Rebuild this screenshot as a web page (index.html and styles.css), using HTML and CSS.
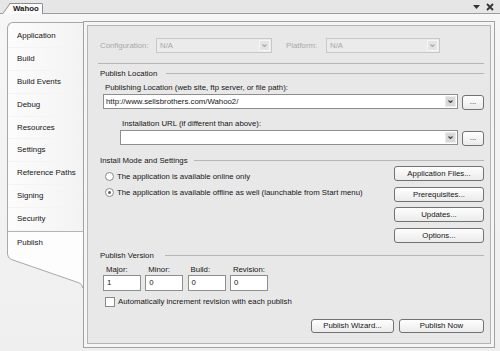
FILE: index.html
```html
<!DOCTYPE html>
<html lang="en">

<head>
  <meta charset="UTF-8" />
  <meta name="viewport" content="width=device-width, initial-scale=1.0" />
  <title>Wahoo - Publish</title>
  <link rel="stylesheet" href="styles.css">
</head>

<body>
  <div class="doc-strip">
    <div class="doc-tab">Wahoo</div>
    <div class="strip-btns">
      <svg width="7" height="4" viewBox="0 0 7 4"><path d="M0 0H7L3.5 4Z" fill="#333" /></svg>
      <svg width="8" height="8" viewBox="0 0 8 8"><path d="M1 1L7 7M7 1L1 7" stroke="#333" stroke-width="1.8" /></svg>
    </div>
  </div>

  <div class="designer">
    <div class="side">
      <ul class="side-tabs">
        <li>Application</li>
        <li>Build</li>
        <li>Build Events</li>
        <li>Debug</li>
        <li>Resources</li>
        <li>Settings</li>
        <li>Reference Paths</li>
        <li>Signing</li>
        <li>Security</li>
        <li class="selected">Publish</li>
      </ul>
      <svg class="tab-tail" width="83" height="36" viewBox="0 0 83 36">
        <path d="M7.5 0Q7.5 4 11.5 5.5L78 28.5Q82.5 30 82.5 34V0Z" fill="#fdfdfd" />
        <path d="M7.5 0Q7.5 4 11.5 5.5L78 28.5Q82.5 30 82.5 34" fill="none" stroke="#a8a8a8" />
      </svg>
    </div>

    <div class="panel">
      <div class="panel-inner">
        <div class="config-row">
          <span class="config-label">Configuration:</span>
          <div class="combo disabled config-combo">
            <span class="combo-text">N/A</span>
            <span class="combo-drop"><svg width="5" height="3" viewBox="0 0 5 3"><path d="M0.5 0.5L2.5 2.5L4.5 0.5" fill="none" stroke="#aaa" stroke-width="1.2" /></svg></span>
          </div>
          <span class="config-label platform-label">Platform:</span>
          <div class="combo disabled platform-combo">
            <span class="combo-text">N/A</span>
            <span class="combo-drop"><svg width="5" height="3" viewBox="0 0 5 3"><path d="M0.5 0.5L2.5 2.5L4.5 0.5" fill="none" stroke="#aaa" stroke-width="1.2" /></svg></span>
          </div>
        </div>

        <div class="rule"></div>

        <div class="group-head">Publish Location</div>
        <div class="field-label">Publishing Location (web site, ftp server, or file path):</div>
        <div class="combo-row">
          <div class="combo">
            <span class="combo-text">http://www.sellsbrothers.com/Wahoo2/</span>
            <span class="combo-drop"><svg width="5" height="3" viewBox="0 0 5 3"><path d="M0.5 0.5L2.5 2.5L4.5 0.5" fill="none" stroke="#444" stroke-width="1.2" /></svg></span>
          </div>
          <button class="btn dots">...</button>
        </div>
        <div class="field-label indent">Installation URL (if different than above):</div>
        <div class="combo-row indent">
          <div class="combo">
            <span class="combo-text"></span>
            <span class="combo-drop"><svg width="5" height="3" viewBox="0 0 5 3"><path d="M0.5 0.5L2.5 2.5L4.5 0.5" fill="none" stroke="#444" stroke-width="1.2" /></svg></span>
          </div>
          <button class="btn dots">...</button>
        </div>

        <div class="group-head mode-head">Install Mode and Settings</div>
        <div class="mode">
          <div class="radios">
            <div class="radio-row"><span class="radio"></span>The application is available online only</div>
            <div class="radio-row"><span class="radio checked"></span>The application is available offline as well (launchable from Start menu)</div>
          </div>
          <div class="mode-buttons">
            <button class="btn">Application Files...</button>
            <button class="btn">Prerequisites...</button>
            <button class="btn">Updates...</button>
            <button class="btn">Options...</button>
          </div>
        </div>

        <div class="group-head version-head">Publish Version</div>
        <div class="version">
          <div class="version-cell"><span>Major:</span><div class="text-box">1</div></div>
          <div class="version-cell"><span>Minor:</span><div class="text-box">0</div></div>
          <div class="version-cell"><span>Build:</span><div class="text-box">0</div></div>
          <div class="version-cell"><span>Revision:</span><div class="text-box">0</div></div>
        </div>
        <div class="check-row"><span class="checkbox"></span>Automatically increment revision with each publish</div>

        <div class="bottom-buttons">
          <button class="btn wizard">Publish Wizard...</button>
          <button class="btn now">Publish Now</button>
        </div>
      </div>
    </div>
  </div>
</body>

</html>
```

FILE: styles.css
```css
* {
  margin: 0;
  padding: 0;
  box-sizing: border-box;
}

body {
  width: 500px;
  height: 351px;
  overflow: hidden;
  font-family: 'Liberation Sans', Arial, sans-serif;
  font-size: 7.8px;
  color: #151515;
  background-color: #f2f2f2;
}

/* document tab strip */
.doc-strip {
  height: 14px;
  display: flex;
  align-items: flex-end;
  background-color: #e6e6e6;
  border-bottom: 1px solid #9c9c9c;
}

.doc-tab {
  position: relative;
  z-index: 1;
  height: 11px;
  margin: 0 0 -1px 10px;
  padding: 0 3px 0 3px;
  background-color: #fbfbfb;
  border: 1px solid #8c8c8c;
  border-left: none;
  border-bottom: none;
  border-top-right-radius: 2px;
  font-weight: bold;
  font-size: 7.8px;
  line-height: 10px;
}

.doc-tab::before {
  content: "";
  position: absolute;
  left: -8px;
  top: -1px;
  bottom: 0;
  width: 10px;
  background-color: #fbfbfb;
  border-left: 1px solid #8c8c8c;
  border-top: 1px solid #8c8c8c;
  transform: skewX(-36deg);
  transform-origin: bottom left;
  z-index: -1;
}

.strip-btns {
  margin-left: auto;
  align-self: center;
  display: flex;
  align-items: center;
  gap: 6px;
  padding-right: 6px;
}

.strip-btns svg {
  display: block;
}

/* designer body */
.designer {
  display: flex;
  height: 337px;
  background: linear-gradient(to bottom, #f6f6f6, #efefef);
}

.side {
  width: 83px;
  flex-shrink: 0;
}

.side-tabs {
  list-style: none;
  margin: 8px 0 0 7px;
  padding-top: 2px;
  border-left: 1px solid #a8a8a8;
  border-top: 1px solid #a8a8a8;
  border-top-left-radius: 6px;
  background: linear-gradient(to right, #fcfcfc, #f3f3f3);
}

.side-tabs li {
  height: 22.9px;
  line-height: 22.9px;
  padding-left: 9px;
  font-size: 7.9px;
  border-bottom: 1px solid #f4f4f4;
}

.side-tabs li.selected {
  background-color: #fdfdfd;
  border-top: 1px solid #b4b4b4;
  border-bottom: none;
  line-height: 21px;
}

.tab-tail {
  display: block;
  overflow: visible;
}

.panel {
  width: 412px;
  height: 327px;
  margin-top: 7px;
  padding: 3px;
  border: 1px solid #a2a2a2;
  background-color: #f5f5f5;
}

.panel-inner {
  height: 100%;
  padding: 12px 6px 0 12px;
  border: 1px solid #b4b4b4;
  background-color: #e8e8e8;
}

/* configuration row */
.config-row {
  display: flex;
  align-items: center;
  height: 15px;
}

.config-label {
  width: 56px;
  color: #a8a8a8;
}

.platform-label {
  width: 40px;
  margin-left: 14px;
}

.config-combo {
  width: 116px;
}

.platform-combo {
  width: 114px;
}

.combo {
  display: flex;
  align-items: center;
  height: 15px;
  background-color: #fff;
  border: 1px solid #8e8e8e;
}

.combo-text {
  flex: 1;
  padding-left: 2px;
  white-space: nowrap;
  overflow: hidden;
}

.combo-drop {
  width: 11px;
  height: 11px;
  margin-right: 1px;
  display: flex;
  align-items: center;
  justify-content: center;
  background-color: #d9d9d9;
  border: 1px solid #ececec;
}

.combo-drop svg {
  display: block;
}

.combo.disabled {
  background-color: #ebebeb;
  border-color: #c8c8c8;
  color: #a8a8a8;
}

.combo.disabled .combo-text {
  padding-left: 3px;
}

.combo.disabled .combo-drop {
  background-color: #e4e4e4;
  border-color: #f6f6f6;
}

.rule {
  margin: 10px 0 0 -2px;
  border-top: 1px solid #b6b6b6;
}

.group-head {
  display: flex;
  align-items: center;
  height: 10px;
  margin-top: 4px;
  white-space: nowrap;
}

.group-head::after {
  content: "";
  flex: 1;
  margin-left: 9px;
  border-top: 1px solid #b6b6b6;
}

.mode-head {
  margin-top: 9px;
}

.mode-head::after {
  margin-left: 6px;
}

.version-head {
  margin-top: 8px;
}

.version-head::after {
  margin-left: 11px;
}

.field-label {
  height: 10px;
  line-height: 10px;
  margin: 5px 0 0 5px;
}

.field-label.indent {
  margin: 9px 0 0 22px;
}

.combo-row {
  display: flex;
  gap: 4px;
  margin-top: 1px;
  padding-left: 3px;
}

.combo-row.indent {
  padding-left: 20px;
}

.combo-row .combo {
  flex: 1;
}

.btn {
  display: flex;
  align-items: center;
  justify-content: center;
  height: 15px;
  font: inherit;
  color: #151515;
  background: linear-gradient(to bottom, #fefefe, #ebebeb);
  border: 1px solid #727272;
  border-radius: 3px;
}

.dots {
  width: 22px;
  margin-top: 1px;
  align-items: flex-end;
  padding-bottom: 3px;
  line-height: 1;
}

/* install mode */
.mode {
  display: flex;
  justify-content: space-between;
  margin-top: 1px;
}

.radios {
  padding: 4px 0 0 5px;
}

.radio-row {
  display: flex;
  align-items: center;
  height: 13px;
  white-space: nowrap;
}

.radio-row + .radio-row {
  margin-top: 3px;
}

.radio {
  width: 9px;
  height: 9px;
  margin-right: 3px;
  border: 1px solid #8a8a8a;
  border-radius: 50%;
  background-color: #fff;
  display: flex;
  align-items: center;
  justify-content: center;
}

.radio.checked::after {
  content: "";
  width: 3px;
  height: 3px;
  border-radius: 50%;
  background-color: #666;
}

.mode-buttons {
  display: flex;
  flex-direction: column;
  gap: 5.6px;
}

.mode-buttons .btn {
  width: 90px;
}

/* publish version */
.version {
  display: grid;
  grid-template-columns: repeat(4, 38px);
  column-gap: 4.3px;
  margin: 4px 0 0 3px;
}

.version-cell span {
  display: block;
  height: 10px;
  line-height: 10px;
  padding-left: 3px;
}

.text-box {
  height: 16px;
  line-height: 14px;
  padding-left: 3px;
  background-color: #fff;
  border: 1px solid #8e8e8e;
}

.check-row {
  display: flex;
  align-items: center;
  height: 10px;
  margin: 6px 0 0 5px;
  white-space: nowrap;
}

.checkbox {
  width: 10px;
  height: 10px;
  margin-right: 3px;
  border: 1px solid #8a8a8a;
  background-color: #fff;
}

.bottom-buttons {
  display: flex;
  justify-content: flex-end;
  gap: 5px;
  margin-top: 12px;
}

.bottom-buttons .btn {
  height: 14px;
}

.wizard {
  width: 83px;
}

.now {
  width: 85px;
}
```
